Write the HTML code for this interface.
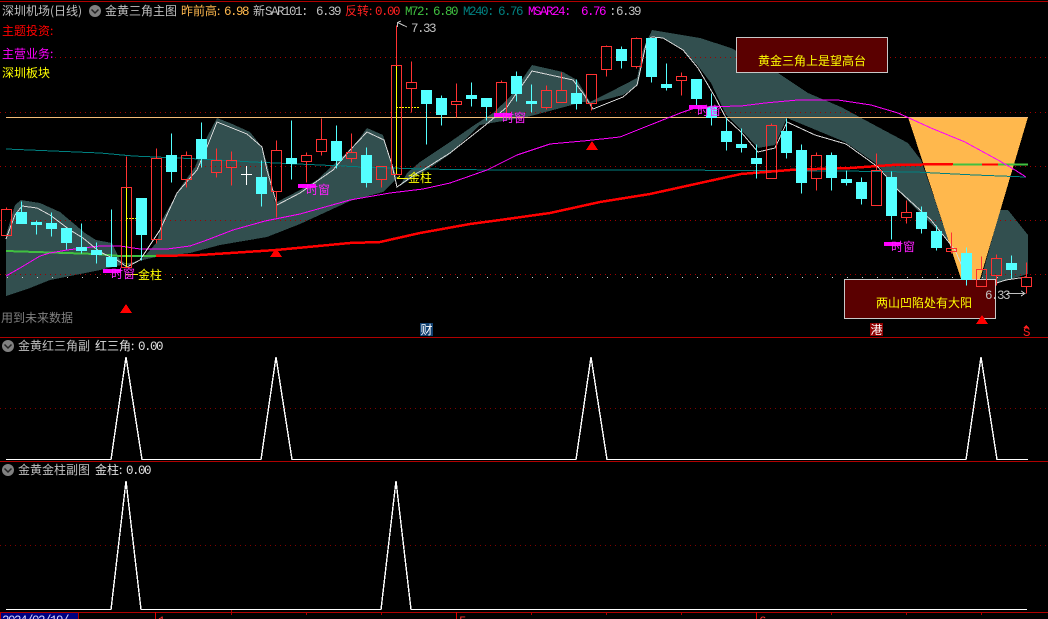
<!DOCTYPE html>
<html><head><meta charset="utf-8"><title>金黄三角主图</title>
<style>
html,body{margin:0;padding:0;background:#000;width:1048px;height:619px;overflow:hidden}
svg{display:block}
text{font-family:"WenQuanYi Zen Hei","Noto Sans CJK SC",sans-serif;font-size:12px;text-rendering:optimizeSpeed}
.n{font-family:"Liberation Mono",monospace;font-size:12.5px;letter-spacing:-1.5px}
</style></head><body>
<svg width="1048" height="619" viewBox="0 0 1048 619" xmlns="http://www.w3.org/2000/svg">
<rect width="1048" height="619" fill="#000"/>
<g shape-rendering="crispEdges">
<!-- grey bands -->
<g fill="#324f4f">
<polygon points="6,235 15,205 21,200 40,203 60,212 85,233 96,240 112,243 120,260 130,266 143,258 157,242 162,220 180,188 195,167 207,137 217,118 230,123 250,132 262,147 268,167 275,203 277,202 300,190 317,180 333,165 353,147 367,128 383,135 390,157 397,178 383,192 350,201 300,224 267,237 220,245 190,253 156,257 125,264 100,270 50,280 30,288 6,296"/>
<polygon points="400,186 407,173 420,162 450,142 473,126 493,113 510,97 532,65 563,72 577,80 590,102 610,92 637,78 643,50 652,30 670,33 700,38 731,48 778,73 808,93 841,107 878,127 908,143 921,160 935,200 950,245 947,240 927,220 900,193 878,165 845,142 787,118 775,145 758,148 741,130 726,115 711,83 698,66 683,50 663,38 652,37 647,40 638,85 623,95 592,103 583,102 527,117 497,122 480,125 450,154 427,170 412,178"/>
<polygon points="1000,210 1008,210 1028,235 1028,274 997,283 980,283"/>
</g>
<!-- grid -->
<g stroke="#a00000" stroke-width="1" stroke-dasharray="1 4" fill="none">
<path d="M55 57.5H1048M0 112.5H1048M0 166.5H1048M0 220.5H1048M0 274.5H1048"/>
<path stroke="#800000" d="M0 408.5H1048M0 545.5H1048"/>
</g>
<!-- orange funnel -->
<polygon fill="#ffb84d" points="908,117 1028,117 980,279 961,279"/>
<!-- frame lines -->
<g fill="#b00000">
<rect x="0" y="1" width="1048" height="1"/>
<rect x="0" y="337" width="1048" height="1"/>
<rect x="0" y="461" width="1048" height="1"/>
</g>
<path d="M6 117.5H1028" stroke="#f4bd78" stroke-width="1"/>
<!-- dotted white row -->
<path d="M7 277.5H1000" stroke="#d0d0d0" stroke-width="1" stroke-dasharray="1 14"/>
<!-- M240 -->
<polyline fill="none" stroke="#008080" points="6,149 100,153 133,156 200,159 253,162 320,165 363,167 420,169 495,170 660,170 840,171 915,172 975,175 1026,177"/>
<!-- M72 -->
<polyline fill="none" stroke="#40c040" stroke-width="2" points="6,251 36,252 96,254 120,256 156,256"/>
<polyline fill="none" stroke="#ff0000" stroke-width="2.5" points="156,256 200,255 276,250 350,243 380,242 420,233 470,224 500,220 550,213 600,202 650,194 700,183 741,174 790,170 817,169 850,168 892,165 953,164"/>
<path d="M953 164.5H982M998 164.5H1028" stroke="#40c040" stroke-width="2" fill="none"/>
<path d="M982 164.5H998" stroke="#ff0000" stroke-width="2" fill="none"/>
<!-- MSAR24 -->
<polyline fill="none" stroke="#ff00ff" points="6,276 20,268 40,256 50,253 67,250 100,246 120,246 140,249 167,249 190,246 207,240 233,230 265,221 300,214 350,200 390,193 423,189 450,183 487,170 517,155 550,144 583,141 620,137 650,125 683,112 698,107 741,106 765,103 798,100 838,100 871,105 898,113 931,128 965,142 998,160 1015,170 1026,177"/>
<!-- white smoothing line -->
<polyline fill="none" stroke="#d8d8d8" points="6,239 15,215 22,206 37,208 50,215 70,230 83,238 100,252 117,260 127,267 140,260 160,230 177,193 197,170 207,147 217,122 247,134 262,147 267,170 277,205 300,193 333,170 350,150 367,132 384,140 392,165 397,187 417,173 423,170 450,153 483,127 507,107 532,71 573,80 583,93 593,109 623,97 637,85 647,40 652,37 663,38 683,50 698,68 715,97 726,118 741,132 758,152 775,148 787,122 815,135 846,144 878,167 898,190 931,220 955,250 968,280"/>
<polyline fill="none" stroke="#d8d8d8" points="990,285 1006,280 1026,277"/>
<!-- boxes -->
<rect x="736.5" y="37.5" width="151" height="35" fill="#5a0000" stroke="#c8c8c8"/>
<rect x="844.5" y="279.5" width="151" height="39" fill="#5a0000" stroke="#c8c8c8"/>
<!-- triangles -->
<g fill="#ff0000">
<polygon points="126,304 132,313 120,313"/>
<polygon points="276,248 282,257 270,257"/>
<polygon points="592,141 598,150 586,150"/>
<polygon points="982,315 988,324 976,324"/>
</g>
<!-- yellow column -->
<path d="M126.5 187V267M396.5 65V175" stroke="#ffff00" fill="none"/>
<path d="M126 218.5H139M396 107.5H419" stroke="#ffff00" stroke-dasharray="2 1" fill="none"/>
<!-- red candles -->
<path fill="none" stroke="#ff3232" transform="translate(.5 .5)" d="
M1 209H11V235H1ZM6 207V209
M121 187H131V267H121ZM126 156V187
M151 158H161V239H151ZM156 148V158M156 239V243
M181 155H191V179H181ZM186 151V155M186 179V187
M211 160H221V172H211ZM216 148V160M216 172V177
M226 160H236V167H226ZM231 151V160M231 167V185
M271 150H281V191H271ZM276 140V150M276 191V217
M301 155H311V161H301ZM306 152V155M306 161V182
M316 139H326V151H316ZM321 118V139M321 151V155
M346 152H356V158H346ZM351 133V152M351 158V162
M376 166H386V179H376ZM381 179V187
M391 65H401V174H391ZM396 25V65
M406 82H416V88H406ZM411 61V82M411 88V112
M451 101H461V104H451ZM456 83V101M456 104V117
M496 82H506V113H496ZM501 80V82
M541 90H551V107H541ZM546 85V90M546 107V109
M556 90H566V102H556ZM561 72V90
M586 74H596V103H586ZM591 103V110
M601 46H611V69H601ZM606 45V46M606 69V76
M631 38H641V66H631ZM636 37V38M636 66V68
M676 76H686V80H676ZM681 72V76M681 80V95
M766 125H776V178H766ZM771 123V125
M811 155H821V178H811ZM816 152V155M816 178V190
M871 170H881V205H871ZM876 153V170
M901 212H911V217H901ZM906 200V212M906 217V223
M946 248H956V251H946ZM951 232V248M951 251V253
M976 269H986V286H976ZM981 256V269
M991 258H1001V275H991ZM996 254V258M996 275V285
M1021 277H1031V286H1021ZM1026 262V277M1026 286V293"/>
<!-- cyan candles -->
<path fill="#54ffff" stroke="#54ffff" transform="translate(.5 .5)" d="
M16 212H26V223H16ZM21 201V212
M31 222H41V224H31ZM36 220V234
M46 223H56V228H46ZM51 212V236
M61 228H71V242H61ZM66 242V249
M76 247H86V250H76ZM81 223V253
M91 250H101V254H91ZM96 242V263
M106 257H116V266H106ZM111 209V257
M136 198H146V234H136ZM141 234V260
M166 155H176V171H166ZM171 133V182
M196 139H206V158H196ZM201 122V167
M256 177H266V193H256ZM261 160V206
M286 158H296V163H286ZM291 120V179
M331 141H341V160H331ZM336 125V168
M361 155H371V182H361ZM366 147V187
M421 90H431V103H421ZM426 103V144
M436 98H446V114H436ZM441 95V125
M466 95H476V98H466ZM471 82V106
M481 98H491V106H481ZM486 106V120
M511 76H521V93H511ZM516 71V101
M526 101H536V103H526ZM531 84V112
M571 93H581V103H571ZM576 79V109
M616 49H626V60H616ZM621 46V68
M646 38H656V76H646ZM651 76V82
M661 84H671V87H661ZM666 63V90
M691 79H701V98H691ZM696 98V105
M706 107H716V117H706ZM711 93V125
M721 131H731V141H721ZM726 117V150
M736 144H746V147H736ZM741 128V152
M751 158H761V163H751ZM756 144V178
M781 131H791V152H781ZM786 118V158
M796 150H806V182H796ZM801 144V193
M826 155H836V177H826ZM831 152V190
M841 179H851V182H841ZM846 170V185
M856 182H866V198H856ZM861 177V204
M886 177H896V215H886ZM891 171V239
M916 212H926V228H916ZM921 206V233
M931 231H941V247H931ZM936 225V250
M961 253H971V279H961ZM966 247V285
M1006 263H1016V269H1006ZM1011 255V278"/>
<!-- white doji -->
<path d="M241 174.5H252M246.5 166V185" stroke="#fff" fill="none"/>
<!-- time-window bars -->
<g fill="#ff00ff">
<rect x="103" y="269" width="18" height="4"/>
<rect x="298" y="184" width="17" height="4"/>
<rect x="494" y="113" width="17" height="4"/>
<rect x="689" y="105" width="17" height="4"/>
<rect x="884" y="242" width="17" height="4"/>
</g>
<!-- pointers -->
<path d="M397.5 27V22.5L407 27M397.5 22.5L401 21M1007 293.5H1025M1021 291L1025 293.5L1021 296" stroke="#c0c0c0" fill="none"/>
<path d="M397 178.5H408M397 178.5L400 176M126 274.5H138" stroke="#ffff00" fill="none"/>
<!-- sub panels -->
<polyline fill="none" stroke="#fff" stroke-width="1.4" points="6,459.5 111,459.5 126,357 142,459.5 261,459.5 276,357 292,459.5 576,459.5 591,357 607,459.5 966,459.5 981,357 997,459.5 1028,459.5"/>
<polyline fill="none" stroke="#fff" stroke-width="1.4" points="6,609.5 111,609.5 126,481 141,609.5 381,609.5 396,481 411,609.5 1027,609.5"/>
<!-- bottom axis -->
<rect x="0" y="612" width="78" height="7" fill="#000080"/>
<g fill="#b00000">
<rect x="0" y="612" width="1048" height="1"/>
<rect x="0" y="612" width="1" height="7"/>
<rect x="78" y="612" width="1" height="7"/>
<rect x="155" y="612" width="1" height="7" fill="#e00000"/>
<rect x="456" y="612" width="1" height="7" fill="#e00000"/>
<rect x="756" y="612" width="1" height="7" fill="#e00000"/>
<path d="M231 610h1v5h-1zM306 613h1v2h-1zM381 613h1v2h-1zM531 613h1v2h-1zM606 613h1v2h-1zM681 613h1v2h-1zM831 613h1v2h-1zM906 613h1v2h-1zM981 613h1v2h-1z"/>
</g>
<!-- badges -->
<rect x="420" y="323" width="13" height="13" fill="#104070"/>
<rect x="870" y="323" width="13" height="13" fill="#900000"/>
<polygon points="1026,325 1029,328 1023,328" fill="#ff2020"/>
</g>
<!-- icons -->
<g>
<circle cx="95" cy="11" r="6" fill="#808080"/><path d="M91.5 9.5L95 13L98.5 9.5" stroke="#222" stroke-width="1.5" fill="none"/>
<circle cx="8" cy="346" r="6" fill="#808080"/><path d="M4.5 344.5L8 348L11.5 344.5" stroke="#222" stroke-width="1.5" fill="none"/>
<circle cx="8" cy="470" r="6" fill="#808080"/><path d="M4.5 468.5L8 472L11.5 468.5" stroke="#222" stroke-width="1.5" fill="none"/>
</g>
<!-- header -->
<text x="2" y="15" fill="#c0c0c0">深圳机场(日线)</text>
<text x="105" y="15" fill="#c0c0c0">金黄三角主图</text>
<text x="181" y="15" fill="#ffb84d">昨前高:</text><text class="n" x="224" y="15" fill="#ffb84d">6.98</text>
<text x="253" y="15" fill="#c0c0c0">新</text><text class="n" x="265" y="15" fill="#c0c0c0">SAR101:</text><text class="n" x="316" y="15" fill="#c0c0c0">6.39</text>
<text x="345" y="15" fill="#ff2020">反转:</text><text class="n" x="375" y="15" fill="#ff2020">0.00</text>
<text class="n" x="405" y="15" fill="#40c040">M72:</text><text class="n" x="433" y="15" fill="#40c040">6.80</text>
<text class="n" x="463" y="15" fill="#008080">M240:</text><text class="n" x="498" y="15" fill="#008080">6.76</text>
<text class="n" x="528" y="15" fill="#ff00ff">MSAR24:</text><text class="n" x="581" y="15" fill="#ff00ff">6.76</text>
<text class="n" x="609" y="15" fill="#c0c0c0">:</text><text class="n" x="616" y="15" fill="#c0c0c0">6.39</text>
<text x="2" y="35" fill="#ff0000">主题投资:</text>
<text x="2" y="58" fill="#ff00ff">主营业务:</text>
<text x="2" y="77" fill="#ffff00">深圳板块</text>
<text x="1" y="322" fill="#808080">用到未来数据</text>
<text class="n" x="411" y="32" fill="#c0c0c0">7.33</text>
<text class="n" x="985" y="299" fill="#c0c0c0">6.33</text>
<text x="758" y="65" fill="#ffff00">黄金三角上是望高台</text>
<text x="876" y="307" fill="#ffff00">两山凹陷处有大阳</text>
<text x="111" y="278" fill="#ff20ff">时窗</text>
<text x="306" y="194" fill="#ff20ff">时窗</text>
<text x="502" y="122" fill="#ff20ff">时窗</text>
<text x="697" y="115" fill="#ff20ff">时窗</text>
<text x="891" y="251" fill="#ff20ff">时窗</text>
<text x="138" y="279" fill="#ffff00">金柱</text>
<text x="408" y="182" fill="#ffff00">金柱</text>
<text x="420.5" y="334" fill="#fff">财</text>
<text x="870.5" y="334" fill="#fff">港</text>
<text class="n" x="1023" y="336" fill="#ff2020">S</text>
<!-- panel titles -->
<text x="18" y="350" fill="#c0c0c0">金黄红三角副</text>
<text x="95" y="350" fill="#e0e0e0">红三角:</text><text class="n" x="138" y="350" fill="#e0e0e0">0.00</text>
<text x="18" y="474" fill="#c0c0c0">金黄金柱副图</text>
<text x="95" y="474" fill="#e0e0e0">金柱:</text><text class="n" x="126" y="474" fill="#e0e0e0">0.00</text>
<!-- axis labels (clipped) -->
<text class="n" x="2" y="624" fill="#d0d0ff">2024/02/19/</text>
<text class="n" x="158" y="625" fill="#ff3030">1</text>
<text class="n" x="459" y="625" fill="#ff3030">5</text>
<text class="n" x="759" y="625" fill="#ff3030">6</text>
</svg>
</body></html>
